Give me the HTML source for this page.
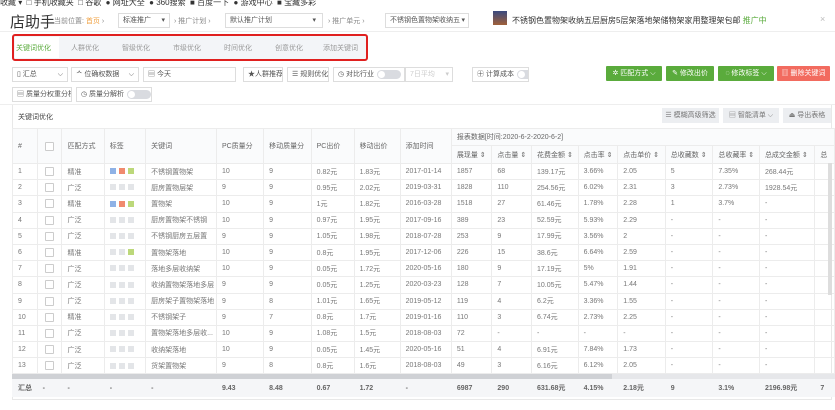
<!DOCTYPE html>
<html><head><meta charset="utf-8">
<style>
*{margin:0;padding:0;box-sizing:border-box}
body{width:835px;height:410px;overflow:hidden;background:#fff;font-family:"Liberation Sans","Noto Sans CJK SC",sans-serif;color:#666;font-size:8px;position:relative}
.a{position:absolute;white-space:nowrap}
.sel{position:absolute;border:1px solid #ddd;background:#fff;height:15px;line-height:13px;padding-left:4px;font-size:7px;color:#555;white-space:nowrap;overflow:hidden}
.btn{position:absolute;height:15px;line-height:15px;color:#fff;font-size:7px;text-align:center;border-radius:1px;white-space:nowrap}
.gb{position:absolute;height:15px;line-height:15px;background:#eceef1;color:#777;font-size:7px;text-align:center;white-space:nowrap}
table{border-collapse:collapse;table-layout:fixed;position:absolute;left:12px;top:128px}
td{border:1px solid #ececec;height:16.2px;padding-left:5px;font-size:7px;color:#777;white-space:nowrap;overflow:hidden}
th{border:1px solid #ececec;font-weight:normal;text-align:left;padding-left:5px;font-size:7px;color:#666;white-space:nowrap;overflow:hidden;background:#fafbfc}
.cb{display:inline-block;width:9px;height:9px;border:1px solid #ccc;border-radius:1px;vertical-align:middle;background:#fff}
.t{display:inline-block;width:6px;height:6px;margin-right:3px;vertical-align:middle;background:#e3e5e8}
.b{background:#8fb2e6}.r{background:#f08a6e}.g{background:#bcd87a}
.sum td{background:#f5f6f8;font-weight:bold;color:#666;height:17px;border-color:#f5f6f8}
.tog{display:inline-block;width:24px;height:9px;border-radius:5px;background:#d9dbe0;vertical-align:middle;position:relative;margin-left:3px}
.tog:before{content:"";position:absolute;left:1px;top:1px;width:7px;height:7px;border-radius:50%;background:#fff}
</style></head><body>
<div class="a" style="top:-3px;left:0;font-size:8px;color:#333">收藏 ▾ &nbsp;□ 手机收藏夹 &nbsp;□ 谷歌 &nbsp;● 网址大全 &nbsp;● 360搜索 &nbsp;■ 百度一下 &nbsp;● 游戏中心 &nbsp;■ 宝藏多彩</div>
<div class="a" style="top:11px;left:10px;font-size:15px;color:#333">店助手</div>
<div class="a" style="top:16px;left:54px;font-size:7px;color:#888">当前位置: <span style="color:#f0a040">首页</span> ›</div>
<div class="sel" style="left:118px;top:13px;width:52px">标准推广 <span style="float:right;margin-right:4px">▾</span></div>
<div class="a" style="top:16px;left:174px;font-size:7px;color:#888">› 推广计划 ›</div>
<div class="sel" style="left:225px;top:13px;width:98px">默认推广计划 <span style="float:right;margin-right:6px">▾</span></div>
<div class="a" style="top:16px;left:328px;font-size:7px;color:#888">› 推广单元 ›</div>
<div class="sel" style="left:385px;top:13px;width:84px">不锈钢色置物架收纳五 <span style="float:right;margin-right:3px">▾</span></div>
<div class="a" style="left:493px;top:11px;width:14px;height:14px;background:linear-gradient(#3a4a80,#a0603a)"></div>
<div class="a" style="top:15px;left:512px;font-size:8px;color:#333">不锈钢色置物架收纳五层厨房5层架落地架储物架家用整理架包邮 <span style="color:#5aab3c">推广中</span></div>
<div class="a" style="top:14px;left:820px;font-size:9px;color:#bbb">×</div>
<div class="a" style="left:0;top:31px;width:835px;height:1px;background:#eee"></div>
<div class="a" style="left:12px;top:34px;width:356px;height:27px;background:#f3f5f8;border:2px solid #e0201f;border-radius:3px"></div>
<div class="a" style="left:15px;top:37px;width:44px;height:21px;background:#fff"></div>
<div class="a" style="top:43px;left:16px;font-size:7px;color:#5aab3c">关键词优化</div>
<div class="a" style="top:43px;left:71px;font-size:7px;color:#999">人群优化</div>
<div class="a" style="top:43px;left:122px;font-size:7px;color:#999">智级优化</div>
<div class="a" style="top:43px;left:173px;font-size:7px;color:#999">市级优化</div>
<div class="a" style="top:43px;left:224px;font-size:7px;color:#999">时间优化</div>
<div class="a" style="top:43px;left:275px;font-size:7px;color:#999">创意优化</div>
<div class="a" style="top:43px;left:323px;font-size:7px;color:#999">添加关键词</div>
<div class="sel" style="left:12px;top:67px;width:56px">▯ 汇总 <span style="float:right;margin-right:4px">⌵</span></div>
<div class="sel" style="left:71px;top:67px;width:68px">ᄉ 位确权数据 <span style="float:right;margin-right:4px">⌵</span></div>
<div class="sel" style="left:143px;top:67px;width:93px">▤ 今天</div>
<div class="sel" style="left:243px;top:67px;width:40px">★人群推荐</div>
<div class="sel" style="left:287px;top:67px;width:42px">☰ 规则优化</div>
<div class="sel" style="left:333px;top:67px;width:72px">◷ 对比行业<span class="tog"></span></div>
<div class="sel" style="left:405px;top:67px;width:48px;color:#ccc">7日平均 <span style="float:right;margin-right:3px">▾</span></div>
<div class="sel" style="left:472px;top:67px;width:57px">㊉ 计算成本<span class="tog"></span></div>
<div class="btn" style="left:606px;top:66px;width:56px;background:#5aab3c">✲ 匹配方式 ⌵</div>
<div class="btn" style="left:666px;top:66px;width:48px;background:#5aab3c">✎ 修改出价</div>
<div class="btn" style="left:718px;top:66px;width:56px;background:#5aab3c">◌ 修改标签 ⌵</div>
<div class="btn" style="left:777px;top:66px;width:53px;background:#f26b5f">▥ 删除关键词</div>
<div class="sel" style="left:12px;top:87px;width:60px">▤ 质量分权重分析</div>
<div class="sel" style="left:76px;top:87px;width:76px">◷ 质量分解析<span class="tog"></span></div>
<div class="a" style="left:12px;top:104px;width:820px;height:296px;border:1px solid #e8e8e8;background:#fff"></div>
<div class="a" style="left:0;top:104px;width:835px;height:1px;background:#eee"></div>
<div class="a" style="top:112px;left:18px;font-size:7px;color:#444">关键词优化</div>
<div class="gb" style="left:662px;top:108px;width:57px">☰ 模糊高级筛选</div>
<div class="gb" style="left:723px;top:108px;width:56px">▤ 智能清单 ⌵</div>
<div class="gb" style="left:783px;top:108px;width:48px">⏏ 导出表格</div>
<table>
<colgroup><col style="width:25px"><col style="width:26px"><col style="width:43px"><col style="width:42px"><col style="width:71px"><col style="width:48px"><col style="width:48px"><col style="width:44px"><col style="width:47px"><col style="width:52px"><col style="width:41px"><col style="width:40px"><col style="width:47px"><col style="width:40px"><col style="width:48px"><col style="width:48px"><col style="width:47px"><col style="width:56px"><col style="width:20px"></colgroup>
<tr style="height:17px"><th rowspan="2">#</th><th rowspan="2" style="text-align:center;padding:0"><span class="cb"></span></th><th rowspan="2">匹配方式</th><th rowspan="2">标签</th><th rowspan="2">关键词</th><th rowspan="2">PC质量分</th><th rowspan="2">移动质量分</th><th rowspan="2">PC出价</th><th rowspan="2">移动出价</th><th rowspan="2">添加时间</th><th colspan="9">报表数据[时间:2020-6-2-2020-6-2]</th></tr>
<tr style="height:18px"><th>展现量 ⇕</th><th>点击量 ⇕</th><th>花费金额 ⇕</th><th>点击率 ⇕</th><th>点击单价 ⇕</th><th>总收藏数 ⇕</th><th>总收藏率 ⇕</th><th>总成交金额 ⇕</th><th>总</th></tr>
<tr><td>1</td><td style="text-align:center;padding:0"><span class="cb"></span></td><td>精准</td><td><i class="t b"></i><i class="t r"></i><i class="t g"></i></td><td>不锈钢置物架</td><td>10</td><td>9</td><td>0.82元</td><td>1.83元</td><td>2017-01-14</td><td>1857</td><td>68</td><td>139.17元</td><td>3.66%</td><td>2.05</td><td>5</td><td>7.35%</td><td>268.44元</td><td></td></tr>
<tr><td>2</td><td style="text-align:center;padding:0"><span class="cb"></span></td><td>广泛</td><td><i class="t"></i><i class="t"></i><i class="t"></i></td><td>厨房置物层架</td><td>9</td><td>9</td><td>0.95元</td><td>2.02元</td><td>2019-03-31</td><td>1828</td><td>110</td><td>254.56元</td><td>6.02%</td><td>2.31</td><td>3</td><td>2.73%</td><td>1928.54元</td><td></td></tr>
<tr><td>3</td><td style="text-align:center;padding:0"><span class="cb"></span></td><td>精准</td><td><i class="t b"></i><i class="t r"></i><i class="t g"></i></td><td>置物架</td><td>10</td><td>9</td><td>1元</td><td>1.82元</td><td>2016-03-28</td><td>1518</td><td>27</td><td>61.46元</td><td>1.78%</td><td>2.28</td><td>1</td><td>3.7%</td><td>-</td><td></td></tr>
<tr><td>4</td><td style="text-align:center;padding:0"><span class="cb"></span></td><td>广泛</td><td><i class="t"></i><i class="t"></i><i class="t"></i></td><td>厨房置物架不锈钢</td><td>10</td><td>9</td><td>0.97元</td><td>1.95元</td><td>2017-09-16</td><td>389</td><td>23</td><td>52.59元</td><td>5.93%</td><td>2.29</td><td>-</td><td>-</td><td>-</td><td></td></tr>
<tr><td>5</td><td style="text-align:center;padding:0"><span class="cb"></span></td><td>广泛</td><td><i class="t"></i><i class="t"></i><i class="t"></i></td><td>不锈钢厨房五层置</td><td>9</td><td>9</td><td>1.05元</td><td>1.98元</td><td>2018-07-28</td><td>253</td><td>9</td><td>17.99元</td><td>3.56%</td><td>2</td><td>-</td><td>-</td><td>-</td><td></td></tr>
<tr><td>6</td><td style="text-align:center;padding:0"><span class="cb"></span></td><td>精准</td><td><i class="t"></i><i class="t"></i><i class="t g"></i></td><td>置物架落地</td><td>10</td><td>9</td><td>0.8元</td><td>1.95元</td><td>2017-12-06</td><td>226</td><td>15</td><td>38.6元</td><td>6.64%</td><td>2.59</td><td>-</td><td>-</td><td>-</td><td></td></tr>
<tr><td>7</td><td style="text-align:center;padding:0"><span class="cb"></span></td><td>广泛</td><td><i class="t"></i><i class="t"></i><i class="t"></i></td><td>落地多层收纳架</td><td>10</td><td>9</td><td>0.05元</td><td>1.72元</td><td>2020-05-16</td><td>180</td><td>9</td><td>17.19元</td><td>5%</td><td>1.91</td><td>-</td><td>-</td><td>-</td><td></td></tr>
<tr><td>8</td><td style="text-align:center;padding:0"><span class="cb"></span></td><td>广泛</td><td><i class="t"></i><i class="t"></i><i class="t"></i></td><td>收纳置物架落地多层</td><td>9</td><td>9</td><td>0.05元</td><td>1.25元</td><td>2020-03-23</td><td>128</td><td>7</td><td>10.05元</td><td>5.47%</td><td>1.44</td><td>-</td><td>-</td><td>-</td><td></td></tr>
<tr><td>9</td><td style="text-align:center;padding:0"><span class="cb"></span></td><td>广泛</td><td><i class="t"></i><i class="t"></i><i class="t"></i></td><td>厨房架子置物架落地</td><td>9</td><td>8</td><td>1.01元</td><td>1.65元</td><td>2019-05-12</td><td>119</td><td>4</td><td>6.2元</td><td>3.36%</td><td>1.55</td><td>-</td><td>-</td><td>-</td><td></td></tr>
<tr><td>10</td><td style="text-align:center;padding:0"><span class="cb"></span></td><td>精准</td><td><i class="t"></i><i class="t"></i><i class="t"></i></td><td>不锈钢架子</td><td>9</td><td>7</td><td>0.8元</td><td>1.7元</td><td>2019-01-16</td><td>110</td><td>3</td><td>6.74元</td><td>2.73%</td><td>2.25</td><td>-</td><td>-</td><td>-</td><td></td></tr>
<tr><td>11</td><td style="text-align:center;padding:0"><span class="cb"></span></td><td>广泛</td><td><i class="t"></i><i class="t"></i><i class="t"></i></td><td>置物架落地多层收...</td><td>10</td><td>9</td><td>1.08元</td><td>1.5元</td><td>2018-08-03</td><td>72</td><td>-</td><td>-</td><td>-</td><td>-</td><td>-</td><td>-</td><td>-</td><td></td></tr>
<tr><td>12</td><td style="text-align:center;padding:0"><span class="cb"></span></td><td>广泛</td><td><i class="t"></i><i class="t"></i><i class="t"></i></td><td>收纳架落地</td><td>10</td><td>9</td><td>0.05元</td><td>1.45元</td><td>2020-05-16</td><td>51</td><td>4</td><td>6.91元</td><td>7.84%</td><td>1.73</td><td>-</td><td>-</td><td>-</td><td></td></tr>
<tr><td>13</td><td style="text-align:center;padding:0"><span class="cb"></span></td><td>广泛</td><td><i class="t"></i><i class="t"></i><i class="t"></i></td><td>货架置物架</td><td>9</td><td>8</td><td>0.8元</td><td>1.6元</td><td>2018-08-03</td><td>49</td><td>3</td><td>6.16元</td><td>6.12%</td><td>2.05</td><td>-</td><td>-</td><td>-</td><td></td></tr>
<tr><td colspan="19" style="height:6px;padding:0;background:#e6e7ea;border:none"></td></tr>
<tr class="sum"><td>汇总</td><td>-</td><td>-</td><td>-</td><td>-</td><td>9.43</td><td>8.48</td><td>0.67</td><td>1.72</td><td>-</td><td>6987</td><td>290</td><td>631.68元</td><td>4.15%</td><td>2.18元</td><td>9</td><td>3.1%</td><td>2196.98元</td><td>7</td></tr>
</table>
<div class="a" style="left:12px;top:374px;width:600px;height:5px;background:#cfd1d5"></div>
<div class="a" style="left:828px;top:163px;width:4px;height:132px;background:#ddd"></div>
</body></html>
